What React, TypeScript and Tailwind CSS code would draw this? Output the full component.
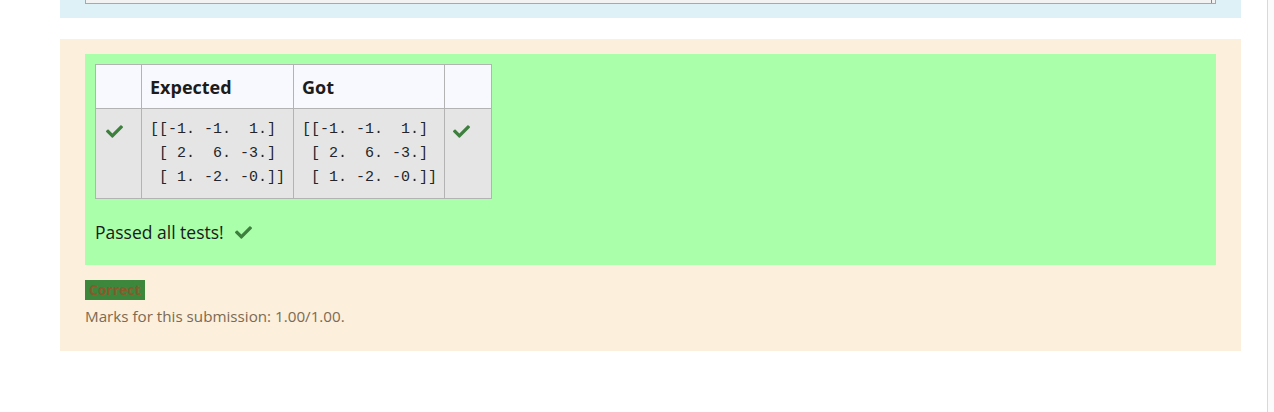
import React from 'react';

const Check: React.FC<{ className?: string }> = ({ className }) => (
  <svg viewBox="0 0 512 512" className={className} fill="currentColor">
    <path d="M173.9 439.4l-166.4-166.4c-10-10-10-26.2 0-36.2l36.2-36.2c10-10 26.2-10 36.2 0L192 312.7 432.1 72.6c10-10 26.2-10 36.2 0l36.2 36.2c10 10 10 26.2 0 36.2L210.1 439.4c-10 10-26.2 10-36.2 0z" />
  </svg>
);

const expected = ['[[-1. -1.  1.]', ' [ 2.  6. -3.]', ' [ 1. -2. -0.]]'];

const App: React.FC = () => {
  return (
    <div className="w-[1274px] h-[412px] flex bg-white overflow-hidden" style={{ fontFamily: '"Open Sans", "Noto Sans", sans-serif' }}>
      <div className="w-[1267px] shrink-0">
        {/* previous question block, cut off at the top */}
        <div className="ml-[60px] mr-[26px] bg-[#def1f7] px-[25px] pb-[14px]">
          <div className="relative h-[4px] bg-[#f2f2f2] border-x border-b border-[#a8a8a8]">
            <div className="absolute right-[3px] bottom-0 w-[8px] h-[3px] border-r border-[#888]" />
          </div>
        </div>

        <div className="ml-[60px] mr-[26px] mt-[21px] bg-[#fcefdc] px-[25px] pt-[15px] pb-[24px]">
          <div className="bg-[#aaffaa] px-[10px] pt-[10px] pb-[20px]">
            <table className="border-collapse text-[#1c1c1c]">
              <thead>
                <tr className="bg-[#f8f9ff] h-[44px]">
                  <th className="w-[46px] border border-[#b3b3b3]" />
                  <th className="w-[152px] border border-[#b3b3b3] px-2 text-left text-[18px] font-bold pt-[2px]">Expected</th>
                  <th className="w-[151px] border border-[#b3b3b3] px-2 text-left text-[18px] font-bold pt-[2px]">Got</th>
                  <th className="w-[47px] border border-[#b3b3b3]" />
                </tr>
              </thead>
              <tbody>
                <tr className="bg-[#e5e5e5]">
                  <td className="border border-[#b3b3b3] align-top pl-[10px] pt-[14px]">
                    <Check className="w-[17px] h-[17px] text-[#3d7f3d]" />
                  </td>
                  {[0, 1].map((c) => (
                    <td key={c} className="border border-[#b3b3b3] align-top pl-[8px] pt-[9px] pb-[8px]">
                      <pre className="text-[15px] leading-6 text-[#22252a]" style={{ fontFamily: '"Liberation Mono", monospace' }}>
                        {expected.join('\n')}
                      </pre>
                    </td>
                  ))}
                  <td className="border border-[#b3b3b3] align-top pl-[8px] pt-[14px]">
                    <Check className="w-[17px] h-[17px] text-[#3d7f3d]" />
                  </td>
                </tr>
              </tbody>
            </table>

            <div className="mt-[20px] flex items-center gap-[11px] text-[17.5px] text-[#1a1a1a] leading-[26px]">
              <span>Passed all tests!</span>
              <Check className="w-[17px] h-[17px] text-[#3d7f3d]" />
            </div>
          </div>

          <div className="mt-[15px] inline-block bg-[#3c873c] px-[4px] h-[20px] text-[14px] leading-[20px] font-bold text-[#8a5a2b] align-top">
            Correct
          </div>
          <div className="mt-[5px] text-[15.2px] text-[#7d6a52] leading-[22px]">Marks for this submission: 1.00/1.00.</div>
        </div>
      </div>
      <div className="w-px bg-[#d9d9d9]" />
      <div className="flex-1 bg-[#fbfbfb]" />
    </div>
  );
};

export default App;
